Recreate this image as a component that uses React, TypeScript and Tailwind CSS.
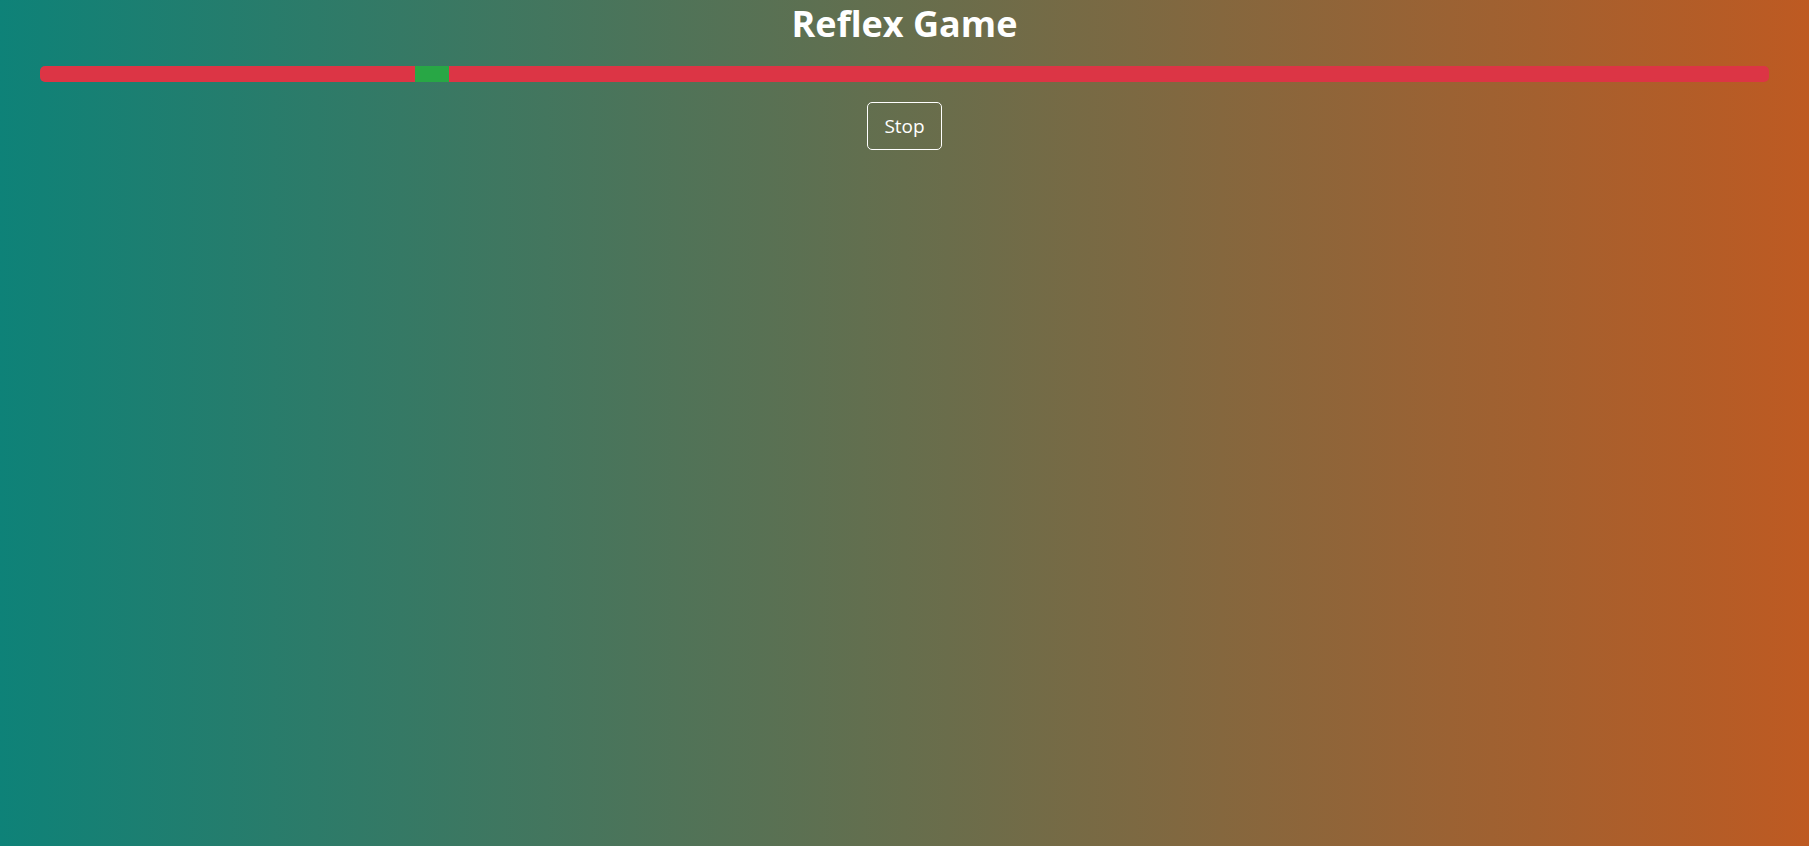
export default function App() {
  return (
    <div className="min-h-screen w-full bg-[linear-gradient(to_right,#0e8278,#be5a22)] font-['Open_Sans',sans-serif] text-white">
      <div className="flex flex-col items-center px-10">
        <h1 className="m-0 h-12 text-[36px] font-bold leading-[48px]">Reflex Game</h1>
        <div className="mt-[18px] flex h-4 w-full overflow-hidden rounded-[5px] bg-[#dc3545]">
          <div className="w-[375px] shrink-0" />
          <div className="w-[34px] shrink-0 bg-[#28a745]" />
        </div>
        <button className="mt-5 h-12 rounded-[5px] border border-white px-4 text-[19px] leading-none text-white">
          Stop
        </button>
      </div>
    </div>
  )
}
